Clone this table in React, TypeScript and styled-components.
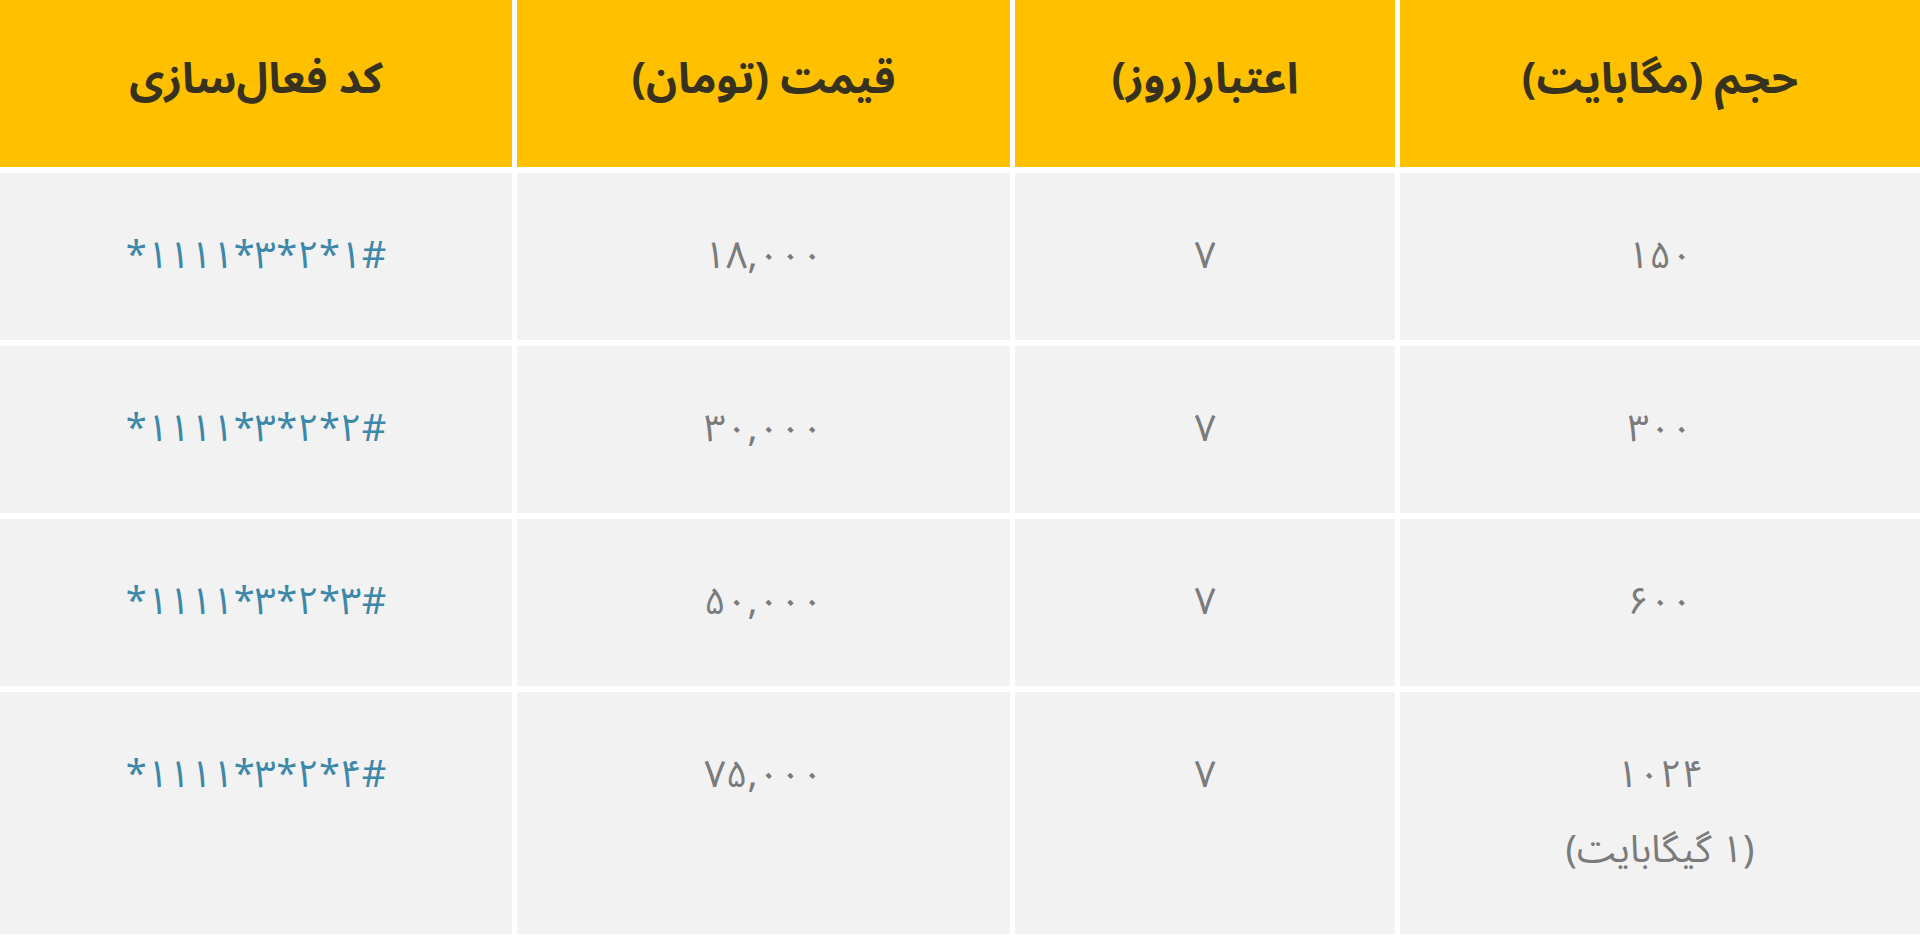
import React from "react";
import styled, { createGlobalStyle } from "styled-components";

const GlobalStyle = createGlobalStyle`
  html, body {
    margin: 0;
    padding: 0;
    background: #ffffff;
    overflow: hidden;
  }
  body {
    font-family: "Noto Sans Arabic", "DejaVu Sans", sans-serif;
  }
`;

const Table = styled.table`
  width: 1920px;
  table-layout: fixed;
  border-collapse: separate;
  border-spacing: 0;
  direction: rtl;
  font-family: "Noto Sans Arabic", "DejaVu Sans", sans-serif;
`;

const HeadCell = styled.th<{ $width: number }>`
  box-sizing: border-box;
  width: ${(p) => p.$width}px;
  height: 173px;
  padding: 0 10px 8px;
  background: #ffc000;
  background-clip: padding-box;
  color: #37321f;
  font-size: 43px;
  font-weight: 700;
  text-align: center;
  vertical-align: middle;
  border-bottom: 6px solid #ffffff;
  border-left: 5px solid #ffffff;
  &:last-child {
    border-left: 0;
  }
`;

const Cell = styled.td<{ $code?: boolean }>`
  box-sizing: border-box;
  padding: 46px 10px;
  background: #f2f2f2;
  background-clip: padding-box;
  color: ${(p) => (p.$code ? "#3d88a8" : "#7b7b7b")};
  font-size: 38px;
  line-height: 75px;
  text-align: center;
  vertical-align: top;
  border-bottom: 6px solid #ffffff;
  border-left: 5px solid #ffffff;
  &:last-child {
    border-left: 0;
  }
`;

const Code = styled.bdi`
  direction: ltr;
  unicode-bidi: isolate;
`;

const Line = styled.div`
  display: block;
`;

type Row = {
  volume: string[];
  days: string;
  price: string;
  code: string;
};

const rows: Row[] = [
  { volume: ["۱۵۰"], days: "۷", price: "۱۸,۰۰۰", code: "*۱۱۱۱*۳*۲*۱#" },
  { volume: ["۳۰۰"], days: "۷", price: "۳۰,۰۰۰", code: "*۱۱۱۱*۳*۲*۲#" },
  { volume: ["۶۰۰"], days: "۷", price: "۵۰,۰۰۰", code: "*۱۱۱۱*۳*۲*۳#" },
  {
    volume: ["۱۰۲۴", "(۱ گیگابایت)"],
    days: "۷",
    price: "۷۵,۰۰۰",
    code: "*۱۱۱۱*۳*۲*۴#",
  },
];

export default function App() {
  return (
    <>
      <GlobalStyle />
      <Table dir="rtl">
        <thead>
          <tr>
            <HeadCell $width={525}>حجم (مگابایت)</HeadCell>
            <HeadCell $width={385}>اعتبار(روز)</HeadCell>
            <HeadCell $width={498}>قیمت (تومان)</HeadCell>
            <HeadCell $width={512}>کد فعال‌سازی</HeadCell>
          </tr>
        </thead>
        <tbody>
          {rows.map((r, i) => (
            <tr key={i}>
              <Cell>
                {r.volume.map((v, j) => (
                  <Line key={j}>{v}</Line>
                ))}
              </Cell>
              <Cell>{r.days}</Cell>
              <Cell>{r.price}</Cell>
              <Cell $code>
                <Code dir="ltr">{r.code}</Code>
              </Cell>
            </tr>
          ))}
        </tbody>
      </Table>
    </>
  );
}
